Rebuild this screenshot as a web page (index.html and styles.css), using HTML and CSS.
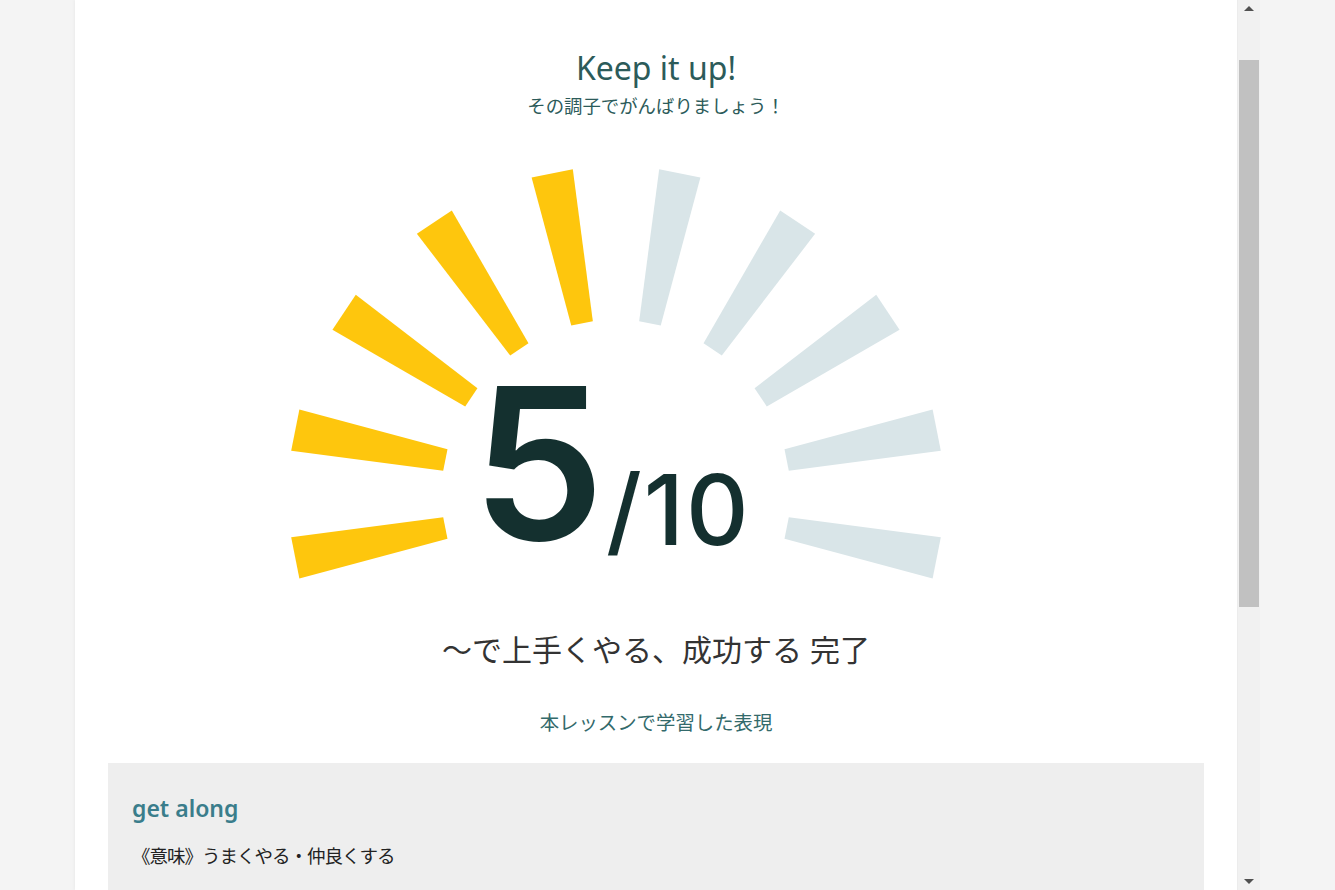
FILE: index.html
```html
<!DOCTYPE html>
<html lang="ja">
  <head>
    <meta charset="UTF-8" />
    <meta name="viewport" content="width=device-width, initial-scale=1.0" />
    <title>Lesson Result</title>
    <link rel="stylesheet" href="styles.css">
  </head>
  <body>
    <div class="frame">
      <main class="panel">
        <h1 class="title">Keep it up!</h1>
        <p class="subtitle">その調子でがんばりましょう！</p>

        <svg class="gauge" width="771" height="430" viewBox="-345 -335 771 430">
          <defs>
            <polygon id="ray" points="174,-11 327,-21 327,21 174,11" />
          </defs>
          <g class="ray-off">
            <use href="#ray" transform="rotate(11.25)" />
            <use href="#ray" transform="rotate(-11.25)" />
            <use href="#ray" transform="rotate(-33.75)" />
            <use href="#ray" transform="rotate(-56.25)" />
            <use href="#ray" transform="rotate(-78.75)" />
          </g>
          <g class="ray-on">
            <use href="#ray" transform="rotate(-101.25)" />
            <use href="#ray" transform="rotate(-123.75)" />
            <use href="#ray" transform="rotate(-146.25)" />
            <use href="#ray" transform="rotate(-168.75)" />
            <use href="#ray" transform="rotate(-191.25)" />
          </g>
          <text class="score" x="-144" y="46">5</text>
          <text class="total" x="-10" y="51">/10</text>
        </svg>

        <h2 class="lesson">〜で上手くやる、成功する 完了</h2>
        <p class="learned">本レッスンで学習した表現</p>

        <div class="phrase">
          <h3 class="phrase-en">get along</h3>
          <p class="phrase-ja">《意味》うまくやる・仲良くする</p>
        </div>
      </main>

      <div class="scrollbar">
        <div class="arrow up"></div>
        <div class="track">
          <div class="thumb"></div>
        </div>
        <div class="arrow down"></div>
      </div>
    </div>
  </body>
</html>
```

FILE: styles.css
```css
* {
  margin: 0;
  padding: 0;
  box-sizing: border-box;
}
body {
  background-color: #f4f4f4;
  font-family: "Noto Sans", "Noto Sans CJK JP", sans-serif;
  overflow: hidden;
}
.frame {
  display: flex;
  height: 890px;
  margin-left: 75px;
}
.panel {
  width: 1162px;
  height: 890px;
  overflow: hidden;
  background-color: #fff;
  text-align: center;
  padding: 50px 33px 0 33px;
  box-shadow: -1px 0 3px rgba(0, 0, 0, 0.04);
}
.title {
  font-size: 32px;
  line-height: 36px;
  font-weight: 400;
  color: #2c5b5a;
}
.subtitle {
  margin-top: 7px;
  font-size: 18.4px;
  line-height: 26px;
  color: #2c5b5a;
}
.gauge {
  display: block;
  margin: 40px auto 0 auto;
}
.ray-on {
  fill: #fec60d;
}
.ray-off {
  fill: #d9e5e8;
}
.score,
.total {
  font-family: Inter, "Noto Sans", sans-serif;
  fill: #14302f;
}
.score {
  font-size: 211px;
  font-weight: 600;
}
.total {
  font-size: 97px;
  font-weight: 500;
  letter-spacing: 2px;
}
.lesson {
  margin-top: 41px;
  font-size: 30px;
  line-height: 40px;
  font-weight: 400;
  color: #333;
}
.learned {
  margin-top: 39px;
  font-size: 19.4px;
  line-height: 28px;
  color: #336a6b;
}
.phrase {
  margin-top: 26px;
  background-color: #eeeeee;
  text-align: left;
  padding: 30px 24px 40px 24px;
}
.phrase-en {
  font-size: 23px;
  line-height: 30px;
  font-weight: 600;
  color: #3a7d8b;
}
.phrase-ja {
  margin-top: 19px;
  font-size: 18.5px;
  line-height: 28px;
  letter-spacing: -1px;
  color: #222;
}
.scrollbar {
  width: 23px;
  height: 890px;
  display: flex;
  flex-direction: column;
  background-color: #f1f1f1;
  border-left: 1px solid #ececec;
}
.arrow {
  height: 17px;
  display: flex;
  justify-content: center;
  align-items: center;
}
.arrow::before {
  content: "";
  border-left: 5px solid transparent;
  border-right: 5px solid transparent;
}
.up::before {
  border-bottom: 5px solid #505050;
}
.down::before {
  border-top: 5px solid #505050;
}
.track {
  flex: 1;
  padding: 0 1px;
}
.thumb {
  margin-top: 43px;
  height: 547px;
  background-color: #c1c1c1;
}
```
